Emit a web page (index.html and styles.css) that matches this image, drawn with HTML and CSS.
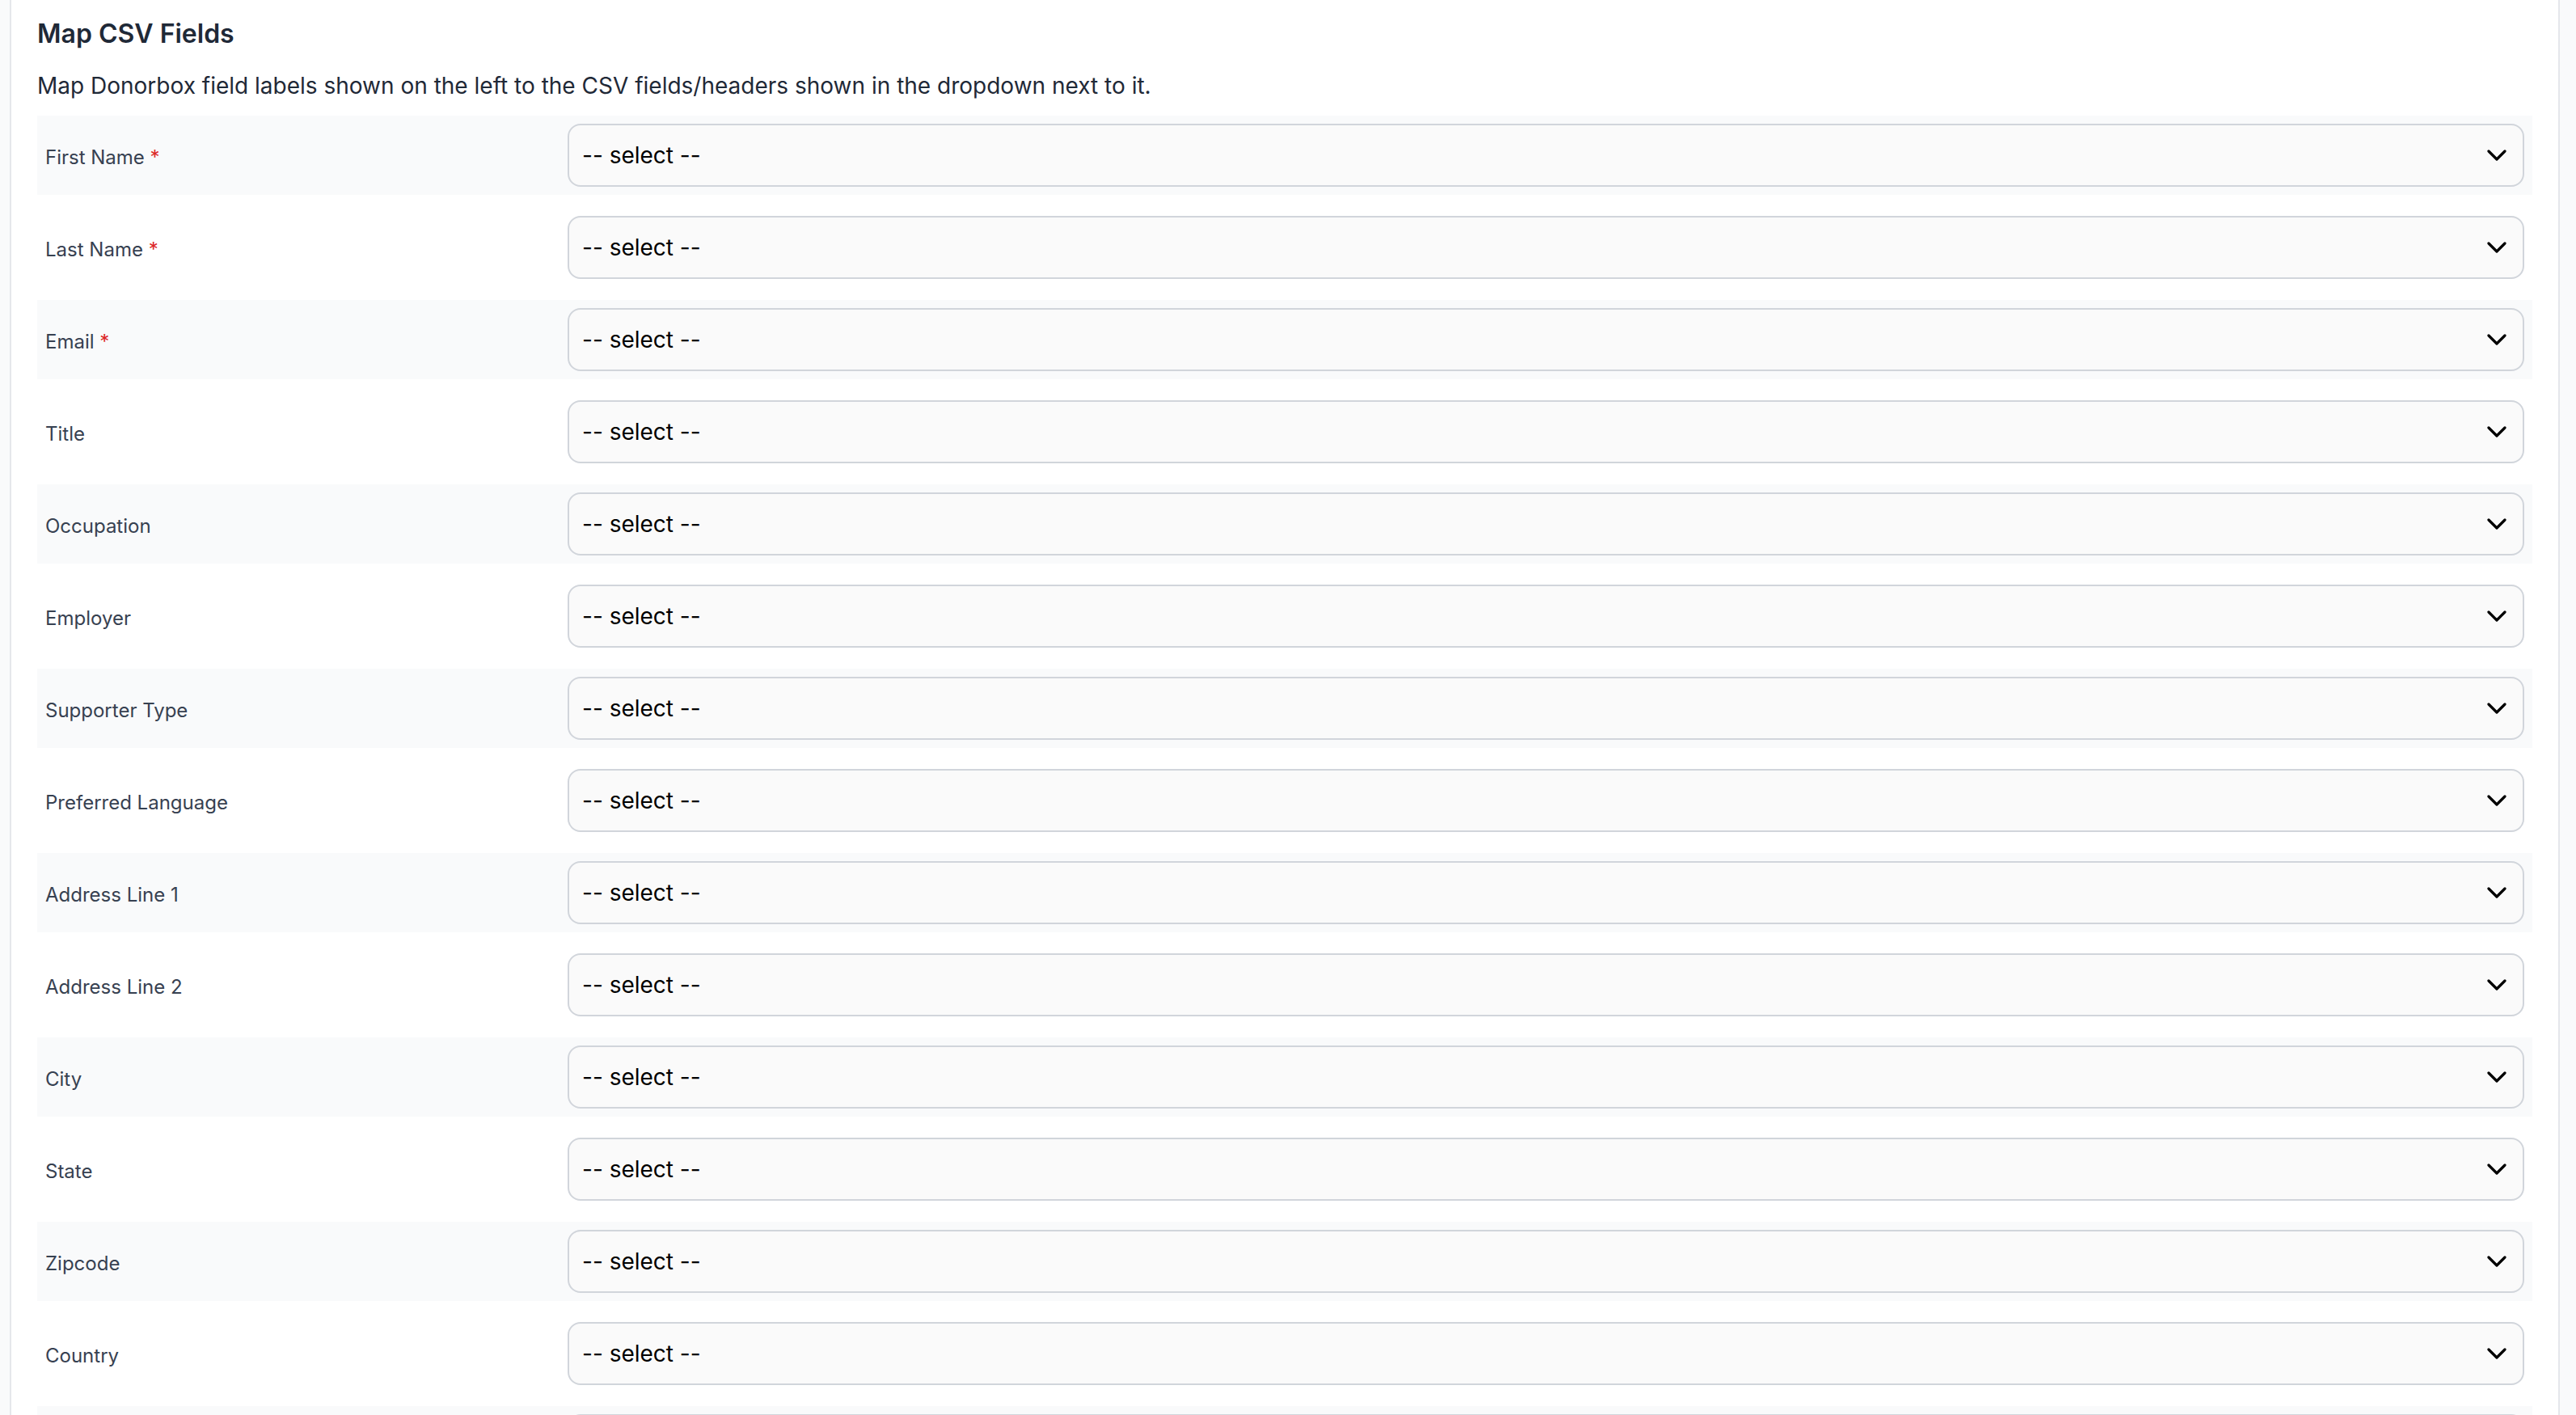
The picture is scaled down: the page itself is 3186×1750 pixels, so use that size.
FILE: index.html
```html
<!DOCTYPE html>
<html lang="en">
<head>
<meta charset="utf-8">
<title>Map CSV Fields</title>
<link rel="stylesheet" href="styles.css">
</head>
<body>
<div class="card">
  <h2 class="title">Map CSV Fields</h2>
  <p class="desc">Map Donorbox field labels shown on the left to the CSV fields/headers shown in the dropdown next to it.</p>
  <div class="rows">
    <div class="row striped"><label class="label">First Name <span class="req">*</span></label><div class="select-wrap"><select class="select"><option>-- select --</option></select><svg class="chev" viewBox="0 0 24 14" width="24" height="14"><path d="M2 2 L12 12 L22 2" fill="none" stroke="#000" stroke-width="3.2" stroke-linecap="round" stroke-linejoin="round"/></svg></div></div>
    <div class="row"><label class="label">Last Name <span class="req">*</span></label><div class="select-wrap"><select class="select"><option>-- select --</option></select><svg class="chev" viewBox="0 0 24 14" width="24" height="14"><path d="M2 2 L12 12 L22 2" fill="none" stroke="#000" stroke-width="3.2" stroke-linecap="round" stroke-linejoin="round"/></svg></div></div>
    <div class="row striped"><label class="label">Email <span class="req">*</span></label><div class="select-wrap"><select class="select"><option>-- select --</option></select><svg class="chev" viewBox="0 0 24 14" width="24" height="14"><path d="M2 2 L12 12 L22 2" fill="none" stroke="#000" stroke-width="3.2" stroke-linecap="round" stroke-linejoin="round"/></svg></div></div>
    <div class="row"><label class="label">Title</label><div class="select-wrap"><select class="select"><option>-- select --</option></select><svg class="chev" viewBox="0 0 24 14" width="24" height="14"><path d="M2 2 L12 12 L22 2" fill="none" stroke="#000" stroke-width="3.2" stroke-linecap="round" stroke-linejoin="round"/></svg></div></div>
    <div class="row striped"><label class="label">Occupation</label><div class="select-wrap"><select class="select"><option>-- select --</option></select><svg class="chev" viewBox="0 0 24 14" width="24" height="14"><path d="M2 2 L12 12 L22 2" fill="none" stroke="#000" stroke-width="3.2" stroke-linecap="round" stroke-linejoin="round"/></svg></div></div>
    <div class="row"><label class="label">Employer</label><div class="select-wrap"><select class="select"><option>-- select --</option></select><svg class="chev" viewBox="0 0 24 14" width="24" height="14"><path d="M2 2 L12 12 L22 2" fill="none" stroke="#000" stroke-width="3.2" stroke-linecap="round" stroke-linejoin="round"/></svg></div></div>
    <div class="row striped"><label class="label">Supporter Type</label><div class="select-wrap"><select class="select"><option>-- select --</option></select><svg class="chev" viewBox="0 0 24 14" width="24" height="14"><path d="M2 2 L12 12 L22 2" fill="none" stroke="#000" stroke-width="3.2" stroke-linecap="round" stroke-linejoin="round"/></svg></div></div>
    <div class="row"><label class="label">Preferred Language</label><div class="select-wrap"><select class="select"><option>-- select --</option></select><svg class="chev" viewBox="0 0 24 14" width="24" height="14"><path d="M2 2 L12 12 L22 2" fill="none" stroke="#000" stroke-width="3.2" stroke-linecap="round" stroke-linejoin="round"/></svg></div></div>
    <div class="row striped"><label class="label">Address Line 1</label><div class="select-wrap"><select class="select"><option>-- select --</option></select><svg class="chev" viewBox="0 0 24 14" width="24" height="14"><path d="M2 2 L12 12 L22 2" fill="none" stroke="#000" stroke-width="3.2" stroke-linecap="round" stroke-linejoin="round"/></svg></div></div>
    <div class="row"><label class="label">Address Line 2</label><div class="select-wrap"><select class="select"><option>-- select --</option></select><svg class="chev" viewBox="0 0 24 14" width="24" height="14"><path d="M2 2 L12 12 L22 2" fill="none" stroke="#000" stroke-width="3.2" stroke-linecap="round" stroke-linejoin="round"/></svg></div></div>
    <div class="row striped"><label class="label">City</label><div class="select-wrap"><select class="select"><option>-- select --</option></select><svg class="chev" viewBox="0 0 24 14" width="24" height="14"><path d="M2 2 L12 12 L22 2" fill="none" stroke="#000" stroke-width="3.2" stroke-linecap="round" stroke-linejoin="round"/></svg></div></div>
    <div class="row"><label class="label">State</label><div class="select-wrap"><select class="select"><option>-- select --</option></select><svg class="chev" viewBox="0 0 24 14" width="24" height="14"><path d="M2 2 L12 12 L22 2" fill="none" stroke="#000" stroke-width="3.2" stroke-linecap="round" stroke-linejoin="round"/></svg></div></div>
    <div class="row striped"><label class="label">Zipcode</label><div class="select-wrap"><select class="select"><option>-- select --</option></select><svg class="chev" viewBox="0 0 24 14" width="24" height="14"><path d="M2 2 L12 12 L22 2" fill="none" stroke="#000" stroke-width="3.2" stroke-linecap="round" stroke-linejoin="round"/></svg></div></div>
    <div class="row"><label class="label">Country</label><div class="select-wrap"><select class="select"><option>-- select --</option></select><svg class="chev" viewBox="0 0 24 14" width="24" height="14"><path d="M2 2 L12 12 L22 2" fill="none" stroke="#000" stroke-width="3.2" stroke-linecap="round" stroke-linejoin="round"/></svg></div></div>
    <div class="row striped"><div class="label"></div><div class="select-wrap"><div class="select"></div></div></div>
  </div>
</div>
</body>
</html>
```
FILE: styles.css
```css
html, body {
  margin: 0;
  padding: 0;
  background: #f9fafb;
  overflow: hidden;
}
body {
  font-family: Inter, "Noto Sans", "Liberation Sans", sans-serif;
  height: 1750px;
}
.card {
  margin: 0 20px 0 12px;
  background: #ffffff;
  border-left: 2px solid #e5e7eb;
  border-right: 2px solid #e5e7eb;
  padding: 19px 32px 0 32px;
  min-height: 1800px;
}
.title {
  margin: 0;
  font-size: 32px;
  line-height: 45px;
  font-weight: 600;
  color: #1f2937;
}
.desc {
  margin: 21px 0 0 0;
  font-size: 28px;
  line-height: 42px;
  color: #1f2937;
}
.rows {
  margin-top: 16px;
  display: flex;
  flex-direction: column;
  gap: 16px;
}
.row {
  display: flex;
  align-items: center;
  padding: 10px;
}
.row.striped {
  background: #f9fafb;
}
.label {
  flex: 0 0 646px;
  font-size: 24px;
  line-height: 36px;
  padding-top: 6px;
  color: #374151;
}
.req {
  color: #dc2626;
}
.select-wrap {
  position: relative;
  flex: 1 1 auto;
  display: flex;
}
.select {
  appearance: none;
  -webkit-appearance: none;
  width: 100%;
  height: 78px;
  box-sizing: border-box;
  border: 2px solid #d1d5db;
  border-radius: 16px;
  background: #fafafa;
  padding: 0 60px 0 16px;
  font-family: Inter, "Noto Sans", sans-serif;
  font-size: 28px;
  color: #000000;
  outline: none;
}
.chev {
  position: absolute;
  right: 22px;
  top: 32px;
  pointer-events: none;
}
```
